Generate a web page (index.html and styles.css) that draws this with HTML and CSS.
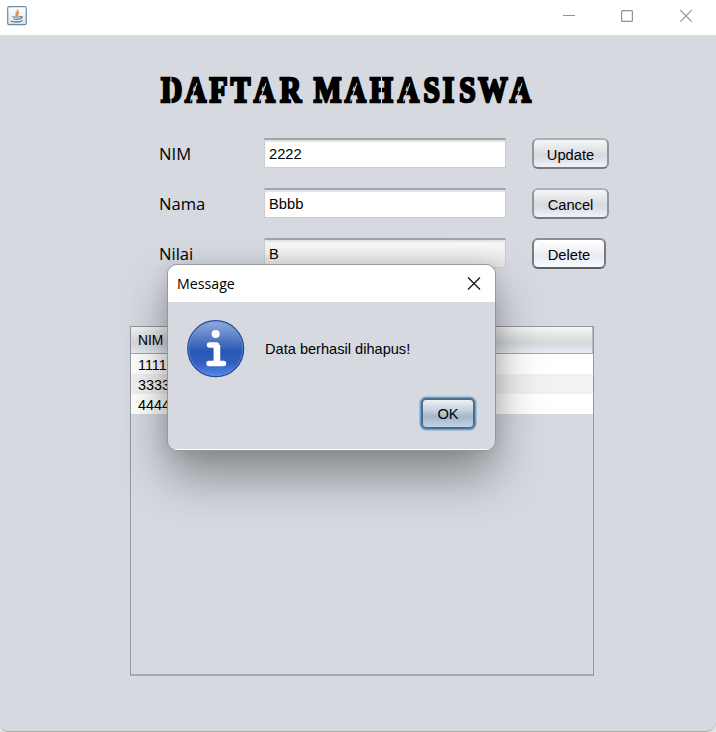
FILE: index.html
```html
<!DOCTYPE html>
<html lang="id">
<head>
<meta charset="utf-8">
<title>Daftar Mahasiswa</title>
<link rel="stylesheet" href="styles.css">
</head>
<body>
<main class="window">
  <header class="titlebar">
    <svg class="java" width="20" height="20" viewBox="0 0 20 20">
      <defs><linearGradient id="tile" x2="0" y2="1"><stop stop-color="#fff"/><stop offset="1" stop-color="#dde3e8"/></linearGradient></defs>
      <rect x=".7" y=".7" width="18.6" height="18" rx="1.5" fill="url(#tile)" stroke="#6e8ba4" stroke-width="1.2"/>
      <path d="M10.5 3.5C12 6 7 6.600 9.700 10M12 6C9.500 7.500 11.500 8 10.500 10" fill="none" stroke="#ef8b48" stroke-width="1.5"/>
      <path d="M5.500 10.500C7 11.500 12 11.200 13.500 10.500M13.500 10.700C16 10 15.500 12.500 13 12.800M6.500 12.700C8 13.500 11.500 13.500 12.800 12.600M4 15C6 16.600 13.500 16.200 15.500 14.500" fill="none" stroke="#63839f" stroke-width="1.300"/>
    </svg>
    <svg class="controls" width="132" height="14" viewBox="0 0 132 14" fill="none" stroke="#919191" stroke-width="1.2">
      <path d="M0 6.500H12M117.300 1.200l11.400 11.400M128.700 1.200l-11.400 11.400"/>
      <rect x="58.600" y="1.600" width="10.800" height="10.800" rx="1"/>
    </svg>
  </header>
  <section class="content">
    <h1 class="heading">
      <svg width="380" height="36" viewBox="0 0 380 36">
        <text class="stencil" text-anchor="middle" transform="scale(.84 1)" y="29" x="13.700 42.300 69.600 95.800 124.400 155.600 178 199.500 232.700 263.700 295.800 323.500 343.500 366 396.400 429">DAFTAR MAHASISWA</text>
        <path class="cuts" d="M11 4V31M221.500 4V31M30.500 28.500L37 10M99.500 28.500L106 10M190.500 28.500L197 10M243.500 28.500L250 10M355.500 28.500L362 10"/>
      </svg>
    </h1>
    <form class="form">
      <label for="nim">NIM</label><input id="nim" value="2222"><button type="button">Update</button>
      <label for="nama">Nama</label><input id="nama" value="Bbbb"><button type="button">Cancel</button>
      <label for="nilai">Nilai</label><input id="nilai" class="shaded" value="B"><button class="hot" type="button">Delete</button>
    </form>
    <div class="table">
      <div class="head">NIM</div>
      <div class="row">1111</div>
      <div class="row">3333</div>
      <div class="row">4444</div>
    </div>
  </section>
</main>
<section class="dialog" role="dialog" aria-labelledby="message">
  <header class="dialog-title"><span id="message">Message</span>
    <svg width="14" height="14" viewBox="0 0 14 14" stroke="#111" stroke-width="1.200"><path d="M1 .5l12 12M13 .5L1 12.500"/></svg>
  </header>
  <div class="dialog-body">
    <svg width="58" height="58" viewBox="0 0 58 58">
      <defs><linearGradient id="info" x2="0" y2="1"><stop stop-color="#93abda"/><stop offset=".2" stop-color="#6d8dcf"/><stop offset=".47" stop-color="#3764b9"/><stop offset=".55" stop-color="#2757b3"/><stop offset=".75" stop-color="#315fc0"/><stop offset="1" stop-color="#5689ed"/></linearGradient></defs>
      <circle cx="28.700" cy="28.700" r="28" fill="url(#info)" stroke="#204b98" stroke-width="1.200"/>
      <circle cx="28.700" cy="28.700" r="26.800" fill="none" stroke="#6e95de" stroke-opacity=".6" stroke-width="1"/>
      <circle cx="28.700" cy="14" r="4" fill="#fff"/>
      <path d="M22.500 25H29.500V43.500M22 43.500H36.500" fill="none" stroke="#fff" stroke-width="5.400" stroke-linecap="round" stroke-linejoin="round"/>
      <path d="M30 25V43" stroke="#fff" stroke-width="6.500"/>
    </svg>
    <p>Data berhasil dihapus!</p>
  </div>
  <div class="actions"><button class="ok" type="button">OK</button></div>
</section>
</body>
</html>
```
FILE: styles.css
```css
* { box-sizing: border-box; }
body { margin: 0; background: #e4e5e3; font: 15px "Liberation Sans", Arial, sans-serif; color: #000; }
.window { width: 716px; height: 732px; overflow: hidden; background: #d6d9e0; border-bottom: 1px solid #aaa; border-radius: 0 0 10px 8px; }
.titlebar { height: 35px; padding: 6px 21px 0 7px; display: flex; justify-content: space-between; background: #fff; }
.controls { margin: 3px 0 0; }
.content { padding: 38px 0 0 130px; }
.heading { height: 36px; margin: 0 0 0 30px; line-height: 0; }
.stencil { font: bold 35px "Liberation Serif", "Times New Roman", serif; stroke: #000; stroke-width: 2.600px; }
.cuts { fill: none; stroke: #d6d9e0; stroke-width: 1px; }
.form { display: grid; grid-template-columns: 105px 268px 78px; grid-template-rows: repeat(3, 50px); margin: 29px 0 0 29px; }
label { margin-top: -1px; font: 16.600px/34px "Open Sans", "Noto Sans", sans-serif; }
input { width: 242px; height: 30px; padding: 1px 4px 0; font: 14.700px "Liberation Sans", Arial, sans-serif; color: #000; background: #fff; border: 1px solid #cbcdd1; border-top: 2px solid #a1a4a9; border-radius: 0; box-shadow: inset 0 2px 1px #e4e4e4; outline: 0; }
.shaded { background: linear-gradient(#fafafa, #e4e4e4); }
button { width: 77px; height: 31px; padding: 2px 0 0; font: 14.700px "Liberation Sans", Arial, sans-serif; color: #000; border: 2px solid #92959b; border-top-color: #acafb4; border-bottom-color: #777a81; border-radius: 6px; background: linear-gradient(#f5f6f7, #dfe1e5 42%, #d6d9df 58%, #f0f3f9); }
.hot { width: 74px; border-color: #8b8e95 #777a81 #5d6066; background: linear-gradient(#fff, #f0f1f5 45%, #e7eaf2 60%, #fafcff); }
.table { width: 464px; height: 350px; margin-top: 38px; border: 1px solid #9297a1; border-bottom: 2px solid #a5aab4; }
.head { height: 27px; padding: 2px 7px 0; line-height: 24px; font-size: 13.800px; border-bottom: 1px solid #a1a5af; border-right: 1px solid #b5b9c2; background: linear-gradient(#f5f5f6, #dedfe2 45%, #d6d8dd 60%, #e8ecf5); }
.row { height: 20px; padding: 1px 7px 0; line-height: 21px; font-size: 14.400px; background: #fff; }
.row:nth-child(3) { background: #f2f2f2; }
.dialog { position: absolute; left: 167px; top: 264px; width: 329px; height: 187px; overflow: hidden; border: 1px solid #95979b; border-radius: 10px; background: #d6d9e0; box-shadow: 0 26px 48px rgba(0, 0, 0, .37), 0 0 18px rgba(0, 0, 0, .1); }
.dialog::after { content: ""; position: absolute; left: 0; right: 0; bottom: 0; height: 1px; background: #fff; }
.dialog-title { height: 37px; padding: 0 14px 0 9px; display: flex; align-items: center; justify-content: space-between; background: #fff; font: 14.200px "Open Sans", "Noto Sans", sans-serif; }
.dialog-body { display: flex; align-items: center; gap: 20px; padding: 18px 0 0 19px; }
.dialog-body p { margin: 0; font-size: 14.600px; }
.actions { display: flex; justify-content: flex-end; padding: 20px 20px 0 0; }
.ok { width: 54px; height: 31px; padding-top: 1px; border: 2px solid #4e6c86; border-radius: 5px; background: linear-gradient(#eef2f5, #c1ced9 42%, #a3b8ca 60%, #bfd3e8); box-shadow: 0 0 0 1.500px #72a5d2; }
```
